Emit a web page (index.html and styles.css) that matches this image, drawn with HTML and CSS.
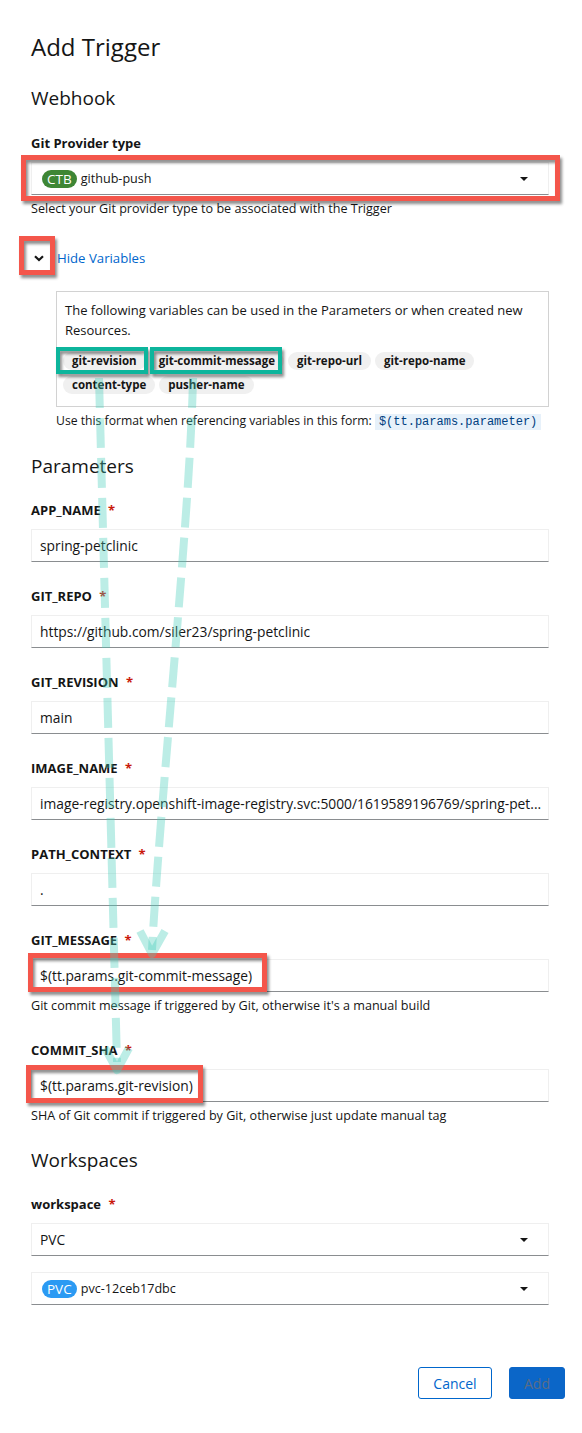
FILE: index.html
```html
<!DOCTYPE html>
<html>
<head>
<meta charset="utf-8">
<title>Add Trigger</title>
<link rel="stylesheet" href="styles.css">
</head>
<body>
<div class="page">
  <h1 class="title">Add Trigger</h1>
  <h2 class="section">Webhook</h2>
  <div class="field field-first">
    <div class="label">Git Provider type</div>
    <div class="input select">
      <span class="badge badge-green">CTB</span><span class="value-small">github-push</span>
      <span class="caret"></span>
    </div>
    <div class="helper">Select your Git provider type to be associated with the Trigger</div>
  </div>

  <div class="toggle">
    <span class="toggle-icon"><svg width="10" height="7" viewBox="0 0 10 7"><path d="M1 1.2 L5 5 L9 1.2" fill="none" stroke="#151515" stroke-width="2.2"/></svg></span>
    <span class="toggle-text">Hide Variables</span>
  </div>

  <div class="vars">
    <p class="vars-text">The following variables can be used in the Parameters or when created new Resources.</p>
    <div class="chips">
      <span class="chip">git-revision</span>
      <span class="chip">git-commit-message</span>
      <span class="chip">git-repo-url</span>
      <span class="chip">git-repo-name</span>
      <span class="chip">content-type</span>
      <span class="chip">pusher-name</span>
    </div>
  </div>
  <div class="format">Use this format when referencing variables in this form: <code class="code">$(tt.params.parameter)</code></div>

  <h2 class="section section-params">Parameters</h2>
  <div class="field field-params">
    <div class="label">APP_NAME <span class="req">*</span></div>
    <div class="input">spring-petclinic</div>
  </div>
  <div class="field">
    <div class="label">GIT_REPO <span class="req">*</span></div>
    <div class="input">https://github.com/siler23/spring-petclinic</div>
  </div>
  <div class="field">
    <div class="label">GIT_REVISION <span class="req">*</span></div>
    <div class="input">main</div>
  </div>
  <div class="field">
    <div class="label">IMAGE_NAME <span class="req">*</span></div>
    <div class="input">image-registry.openshift-image-registry.svc:5000/1619589196769/spring-pet...</div>
  </div>
  <div class="field">
    <div class="label">PATH_CONTEXT <span class="req">*</span></div>
    <div class="input">.</div>
  </div>
  <div class="field">
    <div class="label">GIT_MESSAGE <span class="req">*</span></div>
    <div class="input">$(tt.params.git-commit-message)</div>
    <div class="helper">Git commit message if triggered by Git, otherwise it's a manual build</div>
  </div>
  <div class="field">
    <div class="label">COMMIT_SHA <span class="req">*</span></div>
    <div class="input">$(tt.params.git-revision)</div>
    <div class="helper">SHA of Git commit if triggered by Git, otherwise just update manual tag</div>
  </div>

  <h2 class="section section-ws">Workspaces</h2>
  <div class="field field-ws">
    <div class="label">workspace <span class="req">*</span></div>
    <div class="input select">
      <span>PVC</span>
      <span class="caret"></span>
    </div>
    <div class="input select select-second">
      <span class="badge badge-blue">PVC</span><span class="value-small">pvc-12ceb17dbc</span>
      <span class="caret"></span>
    </div>
  </div>

  <div class="footer">
    <button class="btn btn-secondary">Cancel</button>
    <button class="btn btn-primary">Add</button>
  </div>
</div>

<svg class="annotations" width="582" height="1433" viewBox="0 0 582 1433">
  <defs>
    <filter id="sh" x="-10%" y="-30%" width="120%" height="160%">
      <feDropShadow dx="2" dy="3" stdDeviation="1.6" flood-color="#000" flood-opacity="0.45"/>
    </filter>
  </defs>
  <g fill="none" filter="url(#sh)">
    <rect x="23.5" y="157.5" width="534" height="41" stroke="#f4574b" stroke-width="5"/>
    <rect x="21.5" y="238.5" width="31" height="34" stroke="#f4574b" stroke-width="5"/>
    <rect x="58" y="349" width="88" height="23" stroke="#0fb59c" stroke-width="4"/>
    <rect x="152" y="349" width="128" height="23" stroke="#0fb59c" stroke-width="4"/>
    <rect x="30.5" y="955.5" width="234" height="34" stroke="#f4574b" stroke-width="5"/>
    <rect x="28.5" y="1067.5" width="172" height="33" stroke="#f4574b" stroke-width="5"/>
  </g>
  <g fill="none" stroke="#46cdb9" stroke-opacity="0.36" stroke-width="8">
    <path d="M99 378 L117 1062" stroke-dasharray="30 10"/>
    <path d="M193 378 C190 520 160 800 152 950" stroke-dasharray="30 10"/>
    <path d="M140 931 L152 954 L165 931" stroke-linejoin="round"/>
    <path d="M105 1048 L117 1070 L129 1048" stroke-linejoin="round"/>
  </g>
</svg>
</body>
</html>
```

FILE: styles.css
```css
* { box-sizing: border-box; }
html, body { margin: 0; padding: 0; background: #fff; }
body {
  position: relative;
  width: 582px;
  height: 1433px;
  overflow: hidden;
  font-family: "Open Sans", "Liberation Sans", sans-serif;
  font-size: 12.6px;
  line-height: 20px;
  color: #151515;
}
.page { padding: 32px 33px 0 31px; }
.title { margin: 0; font-size: 24px; line-height: 30px; font-weight: 500; }
.section { margin: 24px 0 0; font-size: 19px; line-height: 24px; font-weight: 500; }
.section-params { margin-top: 22px; }
.section-ws { margin-top: 22px; }
.field { margin-top: 24px; }
.field-first { margin-top: 23px; }
.field-params { margin-top: 22px; }
.field-ws { margin-top: 22px; }
.label { font-weight: 700; font-size: 13px; line-height: 20px; margin-bottom: 9px; }
.req { color: #c9190b; margin-left: 4px; }
.input {
  height: 33px;
  border: 1px solid #efefef;
  border-bottom-color: #8a8d90;
  padding: 0 8px;
  font-size: 13.8px;
  display: flex;
  align-items: center;
  white-space: nowrap;
  overflow: hidden;
}
.select { position: relative; padding-right: 30px; }
.select-second { margin-top: 16px; }
.caret {
  position: absolute;
  right: 20px;
  top: 14px;
  width: 0; height: 0;
  border-left: 4px solid transparent;
  border-right: 4px solid transparent;
  border-top: 4px solid #151515;
}
.badge {
  display: inline-flex;
  align-items: center;
  height: 18px;
  padding: 0 5px;
  border-radius: 9px;
  color: #fff;
  font-size: 13.5px;
  margin-right: 4px;
  margin-left: 2px;
}
.badge-green { background: #3e8635; }
.badge-blue { background: #2b9af3; }
.value-small { font-size: 12.6px; }
.helper { margin-top: 4px; }
.toggle { margin-top: 29px; display: flex; align-items: center; line-height: 20px; }
.toggle-icon { width: 16px; display: flex; justify-content: center; align-items: center; height: 20px; margin-right: 10px; }
.toggle-text { color: #06c; font-size: 13.2px; }
.vars {
  margin: 23px 0 0 25px;
  border: 1px solid #d2d2d2;
  padding: 8px 14px 12px 8px;
}
.vars-text { margin: 0 0 12px; font-size: 13px; }
.chips { display: flex; flex-wrap: wrap; gap: 6px 4px; margin-left: -2px; }
.chip {
  background: #f0f0f0;
  border-radius: 9px;
  height: 18px;
  line-height: 18px;
  padding: 0 9px;
  font-size: 11.5px;
  font-weight: 700;
}
.format { margin: 4px 0 0 25px; white-space: nowrap; font-size: 12.2px; }
.code {
  font-family: "Liberation Mono", "DejaVu Sans Mono", monospace;
  font-size: 12px;
  background: #e7f1fa;
  color: #004080;
  padding: 1px 4px;
}
.footer {
  margin: 62px -16px 0 0;
  display: flex;
  justify-content: flex-end;
  gap: 17px;
}
.btn {
  height: 32px;
  border-radius: 3px;
  font-family: "Open Sans", "Liberation Sans", sans-serif;
  font-size: 14px;
  padding: 0 12px;
  border: 1px solid #06c;
  background: #fff;
}
.btn-secondary { color: #06c; width: 74px; }
.btn-primary { background: #0b66c8; border-color: #0b66c8; color: #5a6c87; width: 56px; }
.annotations { position: absolute; left: 0; top: 0; pointer-events: none; }
```
